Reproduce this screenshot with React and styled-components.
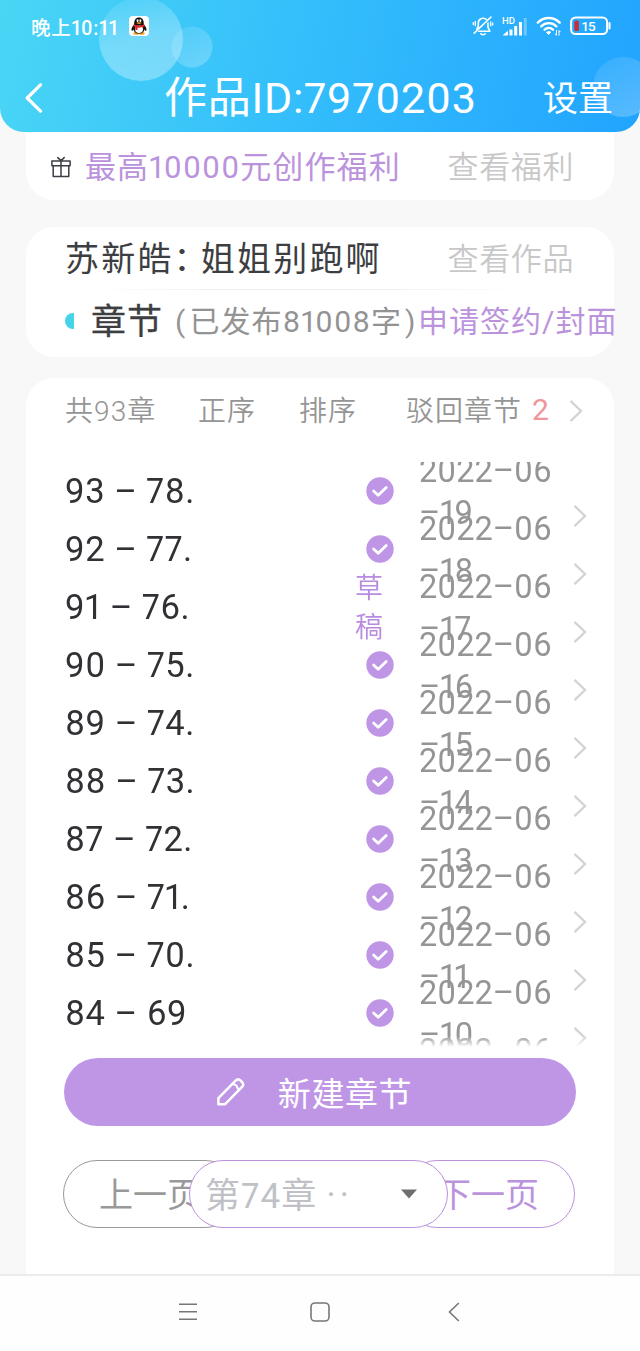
import React from 'react';
import styled, { createGlobalStyle } from 'styled-components';

const capitulos = [
    { titulo: '93 – 78.', dia: '19' },
    { titulo: '92 – 77.', dia: '18' },
    { titulo: '91 – 76.', dia: '17', borrador: true },
    { titulo: '90 – 75.', dia: '16' },
    { titulo: '89 – 74.', dia: '15' },
    { titulo: '88 – 73.', dia: '14' },
    { titulo: '87 – 72.', dia: '13' },
    { titulo: '86 – 71.', dia: '12' },
    { titulo: '85 – 70.', dia: '11' },
    { titulo: '84 – 69', dia: '10' },
    { titulo: '83 – 68', dia: '09' },
];

const Burbujas = () => (
    <Fondo viewBox="0 0 640 132" width="640" height="132">
        <defs>
            <linearGradient id="burbuja" x1="0.3" y1="0" x2="0.6" y2="1">
                <stop offset="0" stopColor="#fff" stopOpacity="0.08" />
                <stop offset="0.5" stopColor="#fff" stopOpacity="0.28" />
                <stop offset="1" stopColor="#fff" stopOpacity="0.32" />
            </linearGradient>
            <linearGradient id="burbujaChica" x1="0" y1="0" x2="0.7" y2="1">
                <stop offset="0" stopColor="#fff" stopOpacity="0.08" />
                <stop offset="1" stopColor="#fff" stopOpacity="0.24" />
            </linearGradient>
        </defs>
        <circle cx="141" cy="39" r="42" fill="url(#burbuja)" />
        <circle cx="192" cy="47" r="20.5" fill="url(#burbujaChica)" />
        <circle cx="623" cy="87" r="30" fill="url(#burbujaChica)" />
    </Fondo>
);

const IconoQQ = () => (
    <svg width="20" height="20" viewBox="0 0 20 20">
        <rect width="20" height="20" rx="4" fill="#fff" />
        <ellipse cx="7.2" cy="17.4" rx="3" ry="1.3" fill="#f5a01c" />
        <ellipse cx="12.8" cy="17.4" rx="3" ry="1.3" fill="#f5a01c" />
        <path d="M5.2 8.5C3.4 10.3 2 13 2.6 14.6c.5.6 1.3-.3 1.9-1.2.5 2.6 2.6 4.2 5.5 4.2s5-1.6 5.5-4.2c.6.9 1.4 1.8 1.9 1.2.6-1.6-.8-4.3-2.6-6.1C15 4 13.2 1.5 10 1.5S5 4 5.2 8.5z" fill="#111" />
        <ellipse cx="10" cy="13.3" rx="4" ry="3.7" fill="#fff" />
        <ellipse cx="8.6" cy="4.7" rx="1" ry="1.4" fill="#fff" />
        <ellipse cx="11.4" cy="4.7" rx="1" ry="1.4" fill="#fff" />
        <ellipse cx="10" cy="7.1" rx="2.6" ry=".8" fill="#f5a01c" />
        <path d="M4.7 8.3c3.2 1.7 7.4 1.7 10.6 0l.5 2c-2.3 1.2-5.1 1.6-7.3 1.4v2.3H6.3v-2.9l-2-.8z" fill="#e0252b" />
    </svg>
);

const IconoSilencio = () => (
    <svg width="22" height="22" viewBox="0 0 22 22" fill="none" stroke="#fff" strokeWidth="1.6" strokeLinecap="round" strokeLinejoin="round">
        <path d="M14.3 4.3C10.5 1.8 6.3 4 6.3 8.3v3.2L4.8 14" />
        <path d="M16 8v4.3l1.8 3.9H6.8" />
        <path d="M8.8 18.8c1.4 1 3 1 4.4 0" />
        <path d="M19 2L2.2 18.2" />
        <path d="M3.3 6.3v4.4M1.3 7.6v2M18.7 7v3.8M20.7 8v2" strokeWidth="1.3" />
    </svg>
);

const IconoSenal = () => (
    <svg width="26" height="21" viewBox="0 0 26 21">
        <text x="0" y="7.6" fill="#fff" fontFamily="Roboto, sans-serif" fontSize="9.5" fontWeight="500">HD</text>
        <path d="M1.5 19l4-3.5V19z" fill="#fff" stroke="#fff" strokeLinejoin="round" />
        <path d="M7.5 13.5h3v6h-3zM12.2 10h3v9.5h-3zM17 6h3v13.5h-3z" fill="#fff" />
        <path d="M21.8 2h3v17.5h-3z" fill="#fff" opacity=".32" />
    </svg>
);

const IconoWifi = () => (
    <svg width="26" height="21" viewBox="0 0 26 21" fill="none" stroke="#fff" strokeWidth="2.4" strokeLinecap="round">
        <path d="M1.8 6.7C8 .5 17.5.5 23.7 6.7" />
        <path d="M5.2 10.3c4.4-4.2 10.8-4.2 15.2 0" />
        <path d="M8.6 13.7c2.5-2.3 5.9-2.3 8.4 0" />
        <path d="M10.8 16.2c1.3-1 2.7-1 4 0l-2 2z" fill="#fff" strokeWidth="1" />
        <path d="M20.5 14.5v4.8l-1.2-1.3M23 19.3v-4.8l1.2 1.3" strokeWidth="1" />
    </svg>
);

const IconoBateria = () => (
    <svg width="42" height="20" viewBox="0 0 42 20">
        <rect x="1.1" y="1.4" width="36" height="16.6" rx="4.5" fill="none" stroke="#fff" strokeWidth="2" />
        <path d="M39.5 7v5.5" stroke="#fff" strokeWidth="2" strokeLinecap="round" />
        <rect x="4.3" y="4.5" width="4.6" height="10.5" rx="1.5" fill="#c4303a" />
        <text x="11.8" y="14.6" fill="#fff" fontFamily="Roboto, sans-serif" fontSize="13.5" fontWeight="500">15</text>
    </svg>
);

const IconoRegalo = () => (
    <svg width="20" height="22" viewBox="0 0 20 22" fill="none" stroke="#3c3e45" strokeWidth="1.5" strokeLinejoin="round" strokeLinecap="round">
        <path d="M.9 4.9h18.2v4.8H.9zM2.2 9.7h15.6v10.8H2.2zM10 4.9v15.6M6.8 1.6L10 4.6l3.2-3" />
    </svg>
);

const IconoLapiz = () => (
    <svg width="30" height="30" viewBox="0 0 30 30" fill="none" stroke="#fff" strokeWidth="2.5" strokeLinejoin="round" strokeLinecap="round">
        <path d="M2.4 21.2L19.6 3.6c1.5-1.5 3.4-1.5 4.9-.1l1.6 1.6c1.5 1.5 1.4 3.4 0 4.8L8.9 27.3H2.4z" />
        <path d="M16.6 6.8l3.7 1.6 2.3 4.6" strokeWidth="2.1" />
    </svg>
);

const Palomita = () => (
    <svg width="28" height="28" viewBox="0 0 28 28">
        <circle cx="14" cy="14" r="13.7" fill="#bf96e6" />
        <path d="M7.6 14l4.6 4.3 8-7.8" fill="none" stroke="#fff" strokeWidth="2.8" strokeLinecap="round" strokeLinejoin="round" />
    </svg>
);

const Flecha = () => (
    <svg width="14" height="24" viewBox="0 0 14 24" fill="none" stroke="#d4d4d4" strokeWidth="2.4">
        <path d="M1.5 1.8L12 12 1.5 22.2" />
    </svg>
);

const App = () => {
    return (
        <Pantalla>
            <GlobalStyle />
            <Encabezado>
                <Burbujas />
                <BarraEstado>
                    <Hora>晚上10:11</Hora>
                    <IconoQQ />
                    <IconosEstado>
                        <IconoSilencio />
                        <IconoSenal />
                        <IconoWifi />
                        <IconoBateria />
                    </IconosEstado>
                </BarraEstado>
                <BarraTitulo>
                    <svg width="18" height="30" viewBox="0 0 18 30" fill="none" stroke="#fff" strokeWidth="3.2" strokeLinecap="round" strokeLinejoin="round">
                        <path d="M15.5 1.8L2.2 15l13.3 13.2" />
                    </svg>
                    <Titulo>作品ID:7970203</Titulo>
                    <Ajustes>设置</Ajustes>
                </BarraTitulo>
            </Encabezado>

            <Contenido>
                <TarjetaBeneficio>
                    <IconoRegalo />
                    <Beneficio>最高10000元创作福利</Beneficio>
                    <Enlace>查看福利</Enlace>
                </TarjetaBeneficio>

                <TarjetaObra>
                    <FilaObra>
                        <NombreObra>苏新皓<DosPuntos>：</DosPuntos>姐姐别跑啊</NombreObra>
                        <Enlace>查看作品</Enlace>
                    </FilaObra>
                    <Separador />
                    <FilaCapitulos>
                        <MedioPunto />
                        <h2>章节</h2>
                        <Publicado>
                            <Parentesis>(</Parentesis>已发布81008字<Parentesis>)</Parentesis>
                        </Publicado>
                        <Solicitud>申请签约/封面</Solicitud>
                    </FilaCapitulos>
                </TarjetaObra>

                <TarjetaLista>
                    <Filtros>
                        <span>共93章</span>
                        <span>正序</span>
                        <span>排序</span>
                        <span>驳回章节</span>
                        <Rechazados>2</Rechazados>
                        <Flecha />
                    </Filtros>

                    <Lista>
                        {capitulos.map(({ titulo, dia, borrador }) => (
                            <Capitulo key={dia}>
                                <NombreCapitulo>{titulo}</NombreCapitulo>
                                <Estado $borrador={borrador}>
                                    {borrador ? '草稿' : <Palomita />}
                                </Estado>
                                <Fecha>2022–06 –{dia}</Fecha>
                                <Ir><Flecha /></Ir>
                            </Capitulo>
                        ))}
                    </Lista>

                    <BotonNuevo>
                        <IconoLapiz />
                        新建章节
                    </BotonNuevo>

                    <Paginador>
                        <BotonPagina>上一页</BotonPagina>
                        <Selector>
                            <span>第74章</span>
                            <Puntos>··</Puntos>
                            <svg width="18" height="10" viewBox="0 0 18 10">
                                <path d="M1 .5h16L9 9.5z" fill="#6f6f6f" />
                            </svg>
                        </Selector>
                        <BotonPagina $siguiente>下一页</BotonPagina>
                    </Paginador>
                </TarjetaLista>
            </Contenido>

            <BarraSistema>
                <svg width="20" height="20" viewBox="0 0 20 20" stroke="#777" strokeWidth="1.5">
                    <path d="M1 2.2h18M1 9.8h18M1 17.2h18" />
                </svg>
                <svg width="20" height="20" viewBox="0 0 20 20" fill="none" stroke="#777" strokeWidth="1.6">
                    <rect x="1" y="1" width="18" height="18" rx="4" />
                </svg>
                <svg width="12" height="20" viewBox="0 0 12 20" fill="none" stroke="#777" strokeWidth="1.6">
                    <path d="M10.8 1L1.5 10l9.3 9" />
                </svg>
            </BarraSistema>
        </Pantalla>
    );
}

const GlobalStyle = createGlobalStyle`
    * {
        box-sizing: border-box;
    }
    body {
        margin: 0;
        background: #f8f8f8;
        font-family: Roboto, 'Noto Sans CJK SC', sans-serif;
        font-variant-numeric: proportional-nums;
    }
    svg {
        display: block;
        flex-shrink: 0;
    }
`;

const Pantalla = styled.div`
    width: 640px;
    height: 1351px;
    display: flex;
    flex-direction: column;
    overflow: hidden;
    white-space: nowrap;
`;

const Encabezado = styled.header`
    position: relative;
    height: 132px;
    flex-shrink: 0;
    border-radius: 0 0 24px 24px;
    background: linear-gradient(102deg, #49d6f5 0%, #35bffb 45%, #21a4ff 100%);
    color: #fff;
    overflow: hidden;
`;

const Fondo = styled.svg`
    position: absolute;
    inset: 0;
`;

const BarraEstado = styled.div`
    position: relative;
    height: 52px;
    display: flex;
    align-items: center;
    padding: 0 28px 0 31px;
`;

const Hora = styled.span`
    width: 98px;
    font-size: 19.5px;
    font-weight: 500;
    letter-spacing: 0.7px;
`;

const IconosEstado = styled.div`
    margin-left: auto;
    display: flex;
    align-items: center;
    gap: 8px;
`;

const BarraTitulo = styled.div`
    position: relative;
    height: 80px;
    display: flex;
    align-items: center;
    padding: 10px 26px 0 25px;
    line-height: 60px;

    svg {
        margin-top: 2px;
    }
`;

const Titulo = styled.h1`
    margin: 2px 0 0 121px;
    width: 379px;
    font-size: 43px;
    font-weight: 400;
    letter-spacing: 0.75px;
`;

const Ajustes = styled.span`
    margin-top: 6px;
    font-size: 35px;
`;

const Contenido = styled.main`
    flex: 1;
    min-height: 0;
    padding: 0 26px;
`;

const Tarjeta = styled.section`
    background: #fff;
`;

const TarjetaBeneficio = styled(Tarjeta)`
    height: 68px;
    border-radius: 0 0 28px 28px;
    display: flex;
    align-items: center;
    padding: 2px 40px 0 25px;
`;

const Beneficio = styled.strong`
    margin: 0 0 5px 14px;
    font-size: 31px;
    font-weight: 400;
    letter-spacing: 1.1px;
    color: #bb93dd;
`;

const Enlace = styled.a`
    margin: 0 0 5px auto;
    font-size: 31px;
    font-weight: 350;
    letter-spacing: 0.6px;
    color: #c8c8c8;
`;

const TarjetaObra = styled(Tarjeta)`
    margin-top: 27px;
    height: 130px;
    border-radius: 28px;
`;

const FilaObra = styled.div`
    height: 62px;
    display: flex;
    align-items: center;
    padding: 1px 40px 0 39px;
`;

const NombreObra = styled.span`
    margin-bottom: 4px;
    font-size: 34px;
    letter-spacing: 2.2px;
    color: #3c3e42;
`;

const DosPuntos = styled.span`
    margin-right: -9px;
`;

const Separador = styled.hr`
    margin: 0 84px 0 62px;
    height: 1px;
    border: 0;
    background: linear-gradient(90deg, #fff, #ededed 35%, #ededed 60%, #fff);
`;

const FilaCapitulos = styled.div`
    height: 62px;
    display: flex;
    align-items: center;
    padding-left: 39px;

    > * {
        flex-shrink: 0;
    }

    h2 {
        margin: 0 0 5px 17px;
        width: 81px;
        font-size: 35px;
        font-weight: 400;
        letter-spacing: 1px;
        -webkit-text-stroke: 0.3px;
        color: #3c3e42;
    }
`;

const MedioPunto = styled.i`
    width: 9px;
    height: 16px;
    border-radius: 9px 0 0 9px;
    background: #45d3ea;
`;

const Publicado = styled.span`
    margin-bottom: 5px;
    width: 246px;
    font-size: 30px;
    letter-spacing: 1.1px;
    color: #939393;
`;

const Parentesis = styled.span`
    padding: 0 3px;
`;

const Solicitud = styled.a`
    margin-bottom: 5px;
    font-size: 30px;
    letter-spacing: 1px;
    color: #bb93dd;
`;

const TarjetaLista = styled(Tarjeta)`
    margin-top: 21px;
    height: 896px;
    border-radius: 28px 28px 0 0;
    padding: 0 38px;
`;

const Filtros = styled.div`
    height: 84px;
    display: grid;
    grid-template-columns: 133px 101px 107px 126px 37px 14px;
    align-items: center;
    padding: 0 0 18px 1px;
    font-size: 28px;
    font-weight: 350;
    letter-spacing: 1px;
    color: #959595;

    span {
        margin-bottom: 4px;
    }
`;

const Rechazados = styled.span`
    font-size: 30px;
    font-weight: 400;
    color: #ee969c;
`;

const Lista = styled.ul`
    margin: 0 -20px 0 0;
    padding: 0;
    list-style: none;
    height: 585px;
    overflow: hidden;
    mask-image: linear-gradient(#000 574px, transparent 585px);
`;

const Capitulo = styled.li`
    height: 58px;
    display: grid;
    grid-template-columns: 292px 63px 154px 14px;
    grid-template-rows: 58px;
    align-items: center;
`;

const NombreCapitulo = styled.span`
    padding-left: 1px;
    font-size: 34.5px;
    letter-spacing: 0.5px;
    color: #303134;
`;

const Estado = styled.span`
    width: 28px;
    margin-left: ${({ $borrador }) => $borrador ? '-1px' : '10px'};
    padding-top: ${({ $borrador }) => $borrador ? '2px' : '0'};
    font-size: 28px;
    font-weight: 350;
    line-height: 39px;
    white-space: normal;
    word-break: break-all;
    color: #b88be0;
`;

/* la fecha no cabe en una línea y se parte en dos */
const Fecha = styled.span`
    width: 140px;
    margin-top: 2px;
    font-size: 32.5px;
    line-height: 42px;
    white-space: normal;
    color: #959595;
`;

const Ir = styled.span`
    padding-top: 50px;
`;

const BotonNuevo = styled.button`
    margin-top: 11px;
    width: 512px;
    height: 68px;
    border: 0;
    border-radius: 34px;
    background: #bf96e6;
    color: #fff;
    font-family: inherit;
    font-size: 33px;
    letter-spacing: 0.6px;
    display: flex;
    align-items: center;
    justify-content: center;
    gap: 32px;
    padding: 0 12px 0 0;
`;

const Paginador = styled.div`
    margin: 34px -1px 0;
    display: flex;
`;

const BotonPagina = styled.button`
    width: ${({ $siguiente }) => $siguiente ? '172px' : '176px'};
    height: 68px;
    border: 1.5px solid ${({ $siguiente }) => $siguiente ? '#bb93dd' : '#999'};
    border-radius: 34px;
    background: #fff;
    color: ${({ $siguiente }) => $siguiente ? '#bb93dd' : '#999'};
    font-family: inherit;
    font-size: 34px;
    padding: 0 2px 3px 0;
`;

const Selector = styled.div`
    position: relative;
    z-index: 1;
    margin: 0 -45px 0 -50px;
    width: 259px;
    height: 68px;
    border: 1.5px solid #bb93dd;
    border-radius: 34px;
    background: #fff;
    display: flex;
    align-items: center;
    padding: 0 29px 0 15px;
    font-size: 35px;
    letter-spacing: 1.2px;
    color: #c0c1c6;

    span {
        margin-bottom: 4px;
    }
    svg {
        margin-left: auto;
    }
`;

const Puntos = styled.span`
    && {
        margin: 2px 0 0 9px;
    }
    letter-spacing: 4px;
`;

const BarraSistema = styled.nav`
    height: 77px;
    flex-shrink: 0;
    border-top: 2px solid #ececec;
    background: #fefefe;
    display: flex;
    align-items: center;
    padding: 0 0 3px 178px;

    svg + svg {
        margin-left: 112px;
    }
    svg:last-child {
        margin-left: 118px;
    }
`;

export default App;
